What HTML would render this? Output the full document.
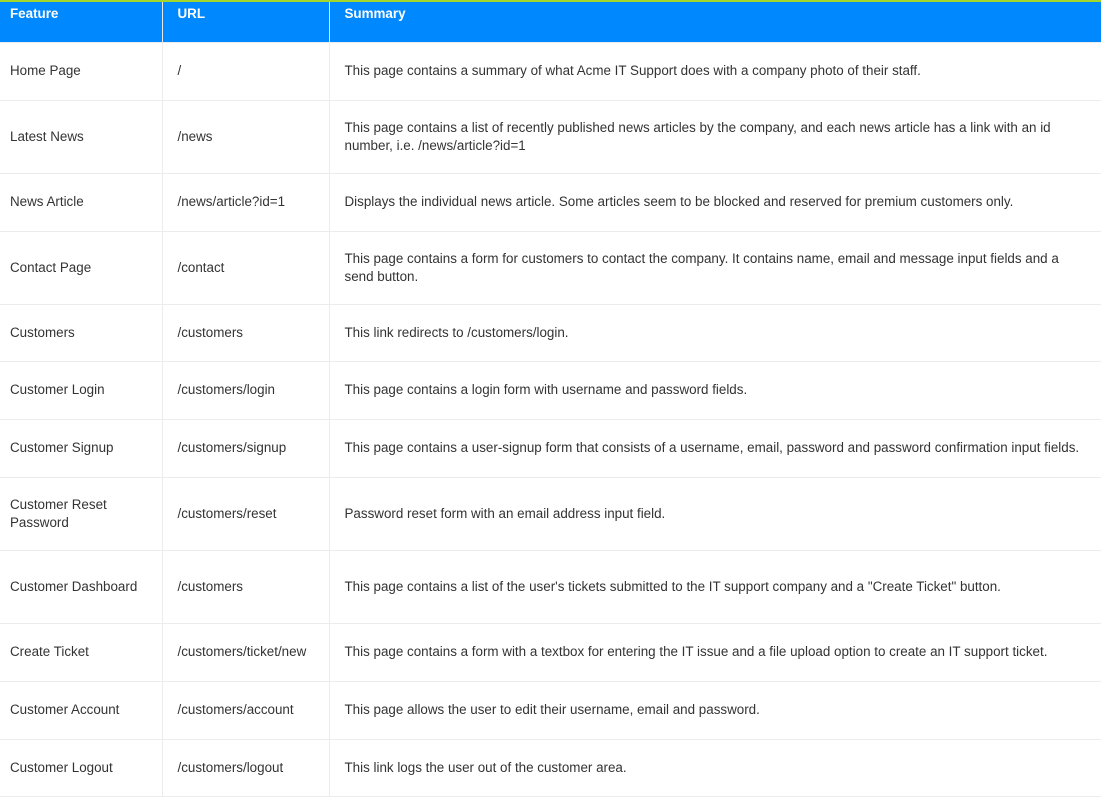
<!DOCTYPE html>
<html><head><meta charset="utf-8"><style>
body{margin:0;background:#fff;font-family:"Liberation Sans",sans-serif;font-size:13.4px;color:#333;}
table{border-collapse:collapse;width:1101px;table-layout:fixed;}
col.a{width:162px}col.b{width:167px}
th{background:#0088ff;color:#fff;font-weight:bold;text-align:left;vertical-align:top;height:41px;padding:4px 0 0 0;box-sizing:border-box;border-top:2px solid #a3d62a;border-right:1px solid #e6e6e6}
td{border:1px solid #ececec;border-left:none;padding:0 14px 0 0;line-height:18px;box-sizing:border-box;vertical-align:middle}
th,td{padding-left:10px}
th:nth-child(n+2),td:nth-child(n+2){padding-left:15px}
th:last-child,td:last-child{border-right:none}
tr.s td{height:58px}tr.d td{height:73px}tr.t td{height:57px}
</style></head><body>
<table><colgroup><col class="a"><col class="b"><col></colgroup>
<tr><th>Feature</th><th>URL</th><th>Summary</th></tr>
<tr class="s"><td>Home Page</td><td>/</td><td>This page contains a summary of what Acme IT Support does with a company photo of their staff.</td></tr>
<tr class="d"><td>Latest News</td><td>/news</td><td>This page contains a list of recently published news articles by the company, and each news article has a link with an id number, i.e. /news/article?id=1</td></tr>
<tr class="s"><td>News Article</td><td>/news/article?id=1</td><td>Displays the individual news article. Some articles seem to be blocked and reserved for premium customers only.</td></tr>
<tr class="d"><td>Contact Page</td><td>/contact</td><td>This page contains a form for customers to contact the company. It contains name, email and message input fields and a send button.</td></tr>
<tr class="t"><td>Customers</td><td>/customers</td><td>This link redirects to /customers/login.</td></tr>
<tr class="s"><td>Customer Login</td><td>/customers/login</td><td>This page contains a login form with username and password fields.</td></tr>
<tr class="s"><td>Customer Signup</td><td>/customers/signup</td><td>This page contains a user-signup form that consists of a username, email, password and password confirmation input fields.</td></tr>
<tr class="d"><td>Customer Reset Password</td><td>/customers/reset</td><td>Password reset form with an email address input field.</td></tr>
<tr class="d"><td>Customer Dashboard</td><td>/customers</td><td>This page contains a list of the user's tickets submitted to the IT support company and a "Create Ticket" button.</td></tr>
<tr class="s"><td>Create Ticket</td><td>/customers/ticket/new</td><td>This page contains a form with a textbox for entering the IT issue and a file upload option to create an IT support ticket.</td></tr>
<tr class="s"><td>Customer Account</td><td>/customers/account</td><td>This page allows the user to edit their username, email and password.</td></tr>
<tr class="t"><td>Customer Logout</td><td>/customers/logout</td><td>This link logs the user out of the customer area.</td></tr>
</table></body></html>
